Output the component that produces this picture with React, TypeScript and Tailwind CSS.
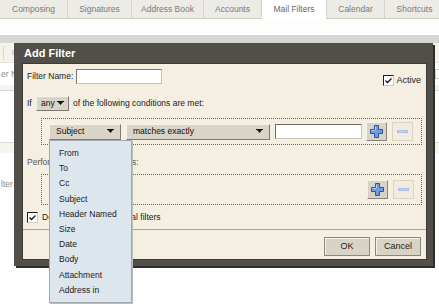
import React from 'react';

const tabs = [
  { label: 'Composing', w: 'w-[68px]' },
  { label: 'Signatures', w: 'w-[64px]' },
  { label: 'Address Book', w: 'w-[72px]' },
  { label: 'Accounts', w: 'w-[58px]' },
  { label: 'Mail Filters', w: 'w-[65px]', active: true },
  { label: 'Calendar', w: 'w-[58px]' },
  { label: 'Shortcuts', w: 'w-[60px]' },
];

const fields = ['From', 'To', 'Cc', 'Subject', 'Header Named', 'Size', 'Date', 'Body', 'Attachment', 'Address in'];

const Arrow = () => (
  <svg width="7" height="5" viewBox="0 0 7 5" className="shrink-0">
    <rect x="0" y="0" width="7" height="1" fill="#111" />
    <polygon points="1,1 6,1 3.5,4" fill="#111" />
  </svg>
);

const PlusBtn = () => (
  <button className="flex h-[19px] w-[21px] items-center justify-center border border-t-[#f4f1ea] border-l-[#f4f1ea] border-r-[#8a857a] border-b-[#8a857a] bg-[#d8d2c6]">
    <svg width="13" height="13" viewBox="0 0 13 13">
      <path d="M4.5 0.5h4v4h4v4h-4v4h-4v-4h-4v-4h4z" fill="#6f9be0" stroke="#2854a6" strokeWidth="1" />
      <path d="M5.5 1.5v3.5M1.5 5.5h3.5" stroke="#b9d0f3" strokeWidth="1" />
    </svg>
  </button>
);

const MinusBtn = () => (
  <button className="flex h-[19px] w-[21px] items-center justify-center border border-[#d9d3c6] bg-[#f2ecdf]">
    <span className="block h-[3px] w-[11px] border border-[#a8bde0] bg-[#c8d7ee]" />
  </button>
);

const Check = () => (
  <span className="flex h-[11px] w-[11px] shrink-0 items-center justify-center border border-[#1c1c1c] border-r-[#d0cbc0] border-b-[#d0cbc0] bg-white">
    <svg width="7" height="6" viewBox="0 0 7 6">
      <path d="M0.5 2.5l2 2 4-4" stroke="#111" strokeWidth="1.3" fill="none" />
    </svg>
  </span>
);

const selectCls =
  'flex items-center justify-between border border-t-[#f6f3ec] border-l-[#f6f3ec] border-r-[#7f7a70] border-b-[#7f7a70] bg-[#d9d4c8] text-[#111]';

export default function App() {
  return (
    <div className="relative h-[304px] w-[439px] overflow-hidden bg-white font-['Liberation_Sans',Arial,sans-serif] text-[8.5px] text-[#1a1a1a]">
      {/* tab bar */}
      <div className="flex h-[19px] border-b border-[#cfccc4] bg-[#ecebe6]">
        {tabs.map((t) => (
          <div
            key={t.label}
            className={`${t.w} flex shrink-0 items-center justify-center border-r border-[#d6d3cb] ${
              t.active ? 'h-[19px] bg-white text-[#666]' : 'text-[#7a7a7a]'
            }`}
          >
            {t.label}
          </div>
        ))}
      </div>
      <div className="h-[16px] bg-[#fdfdfc]" />
      <div className="h-[8px] bg-[#d6d6d4]" />

      {/* page content behind the dialog */}
      <div className="flex h-[20px] items-center border-b border-[#e6e2d8] bg-[#f5f2ea] pl-[3px]">
        <span className="h-[14px] w-px bg-[#d8d5cc]" />
        <span className="ml-[8px] h-[5px] w-[3px] bg-[#e6c8e6]" />
      </div>
      <div className="flex h-[22px] items-center text-[#8a8a8a]">
        <span className="pl-[1px]">er N</span>
        <span className="ml-auto mr-[-4px] h-[10px] w-[8px] border border-[#c9c9c9]" />
      </div>
      <div className="h-[6px] border-b border-[#d7d7d7] bg-[#f3f3f1]" />
      <div className="h-[51px]" />
      <div className="h-[11px] border-t border-[#d9d9d9] bg-[#f6f4ee]" />
      <div className="flex h-[38px] items-end pl-[1px] text-[#8a8a8a]">lter</div>

      {/* dialog */}
      <div className="absolute left-[14px] top-[43px] flex h-[223px] w-[419px] flex-col bg-[#524f49] shadow-[2px_2px_0_#2e2d2a]">
        <div className="flex h-[20px] items-center pl-[10px] text-[11px] font-bold text-white">Add Filter</div>
        <div className="relative ml-[8px] mr-[6px] flex h-[197px] flex-col border border-[#3e3c37] bg-[#f5efe1] px-[4px] pt-[5px]">
          {/* name row */}
          <div className="flex h-[15px] items-center">
            <span className="whitespace-nowrap">Filter Name:</span>
            <span className="ml-[3px] h-[15px] w-[86px] border border-[#7f7a70] border-r-[#c9c3b6] border-b-[#c9c3b6] bg-white" />
            <span className="ml-auto mr-[1px] flex items-center gap-[2px] pt-[8px] text-[9px]">
              <Check />
              Active
            </span>
          </div>

          {/* any row */}
          <div className="mt-[12px] flex h-[15px] items-center">
            <span className="w-[9px]">If</span>
            <span className={`${selectCls} h-[15px] w-[33px] px-[4px]`}>
              any
              <Arrow />
            </span>
            <span className="ml-[4px]">of the following conditions are met:</span>
          </div>

          {/* conditions */}
          <div className="ml-[14px] mt-[7px] flex h-[27px] w-[381px] items-center border border-dotted border-[#6a675f] pl-[7px]">
            <span className={`${selectCls} h-[16px] w-[72px] px-[6px]`}>
              Subject
              <Arrow />
            </span>
            <span className={`${selectCls} ml-[5px] h-[16px] w-[144px] px-[6px]`}>
              matches exactly
              <Arrow />
            </span>
            <span className="ml-[5px] h-[15px] w-[87px] border border-[#6f6a60] border-r-[#c9c3b6] border-b-[#c9c3b6] bg-white" />
            <span className="ml-[4px]">
              <PlusBtn />
            </span>
            <span className="ml-[5px]">
              <MinusBtn />
            </span>
          </div>

          <div className="mt-[12px] h-[10px] leading-[10px] text-[#555]">Perform the following actions:</div>

          {/* actions */}
          <div className="ml-[14px] mt-[7px] flex h-[31px] w-[381px] items-center justify-end border border-dotted border-[#6a675f] pr-[7px]">
            <PlusBtn />
            <span className="ml-[5px]">
              <MinusBtn />
            </span>
          </div>

          <div className="mt-[7px] flex h-[11px] items-center gap-[4px]">
            <Check />
            Do not process additional filters
          </div>

          <div className="-mx-[4px] mt-[6px] h-px bg-[#a9a396]" />

          <div className="mt-[7px] flex justify-end gap-[5px] pr-[1px]">
            <button className="h-[19px] w-[46px] border border-[#8c877c] bg-[#d8d3c7] text-[9px] text-[#222] shadow-[inset_1px_1px_0_#f4f1ea]">
              OK
            </button>
            <button className="h-[19px] w-[46px] border border-[#8c877c] bg-[#d8d3c7] text-[9px] text-[#222] shadow-[inset_1px_1px_0_#f4f1ea]">
              Cancel
            </button>
          </div>

          {/* open field menu */}
          <div className="absolute left-[26px] top-[76px] w-[83px] border border-[#a3a8ad] bg-[#dde6ed] pb-[4px] pt-[5px] shadow-[1px_1px_0_#b8bdc2]">
            {fields.map((f) => (
              <div key={f} className="h-[15.2px] pl-[9px] leading-[15.2px] text-[#1a1a1a]">
                {f}
              </div>
            ))}
          </div>
        </div>
      </div>
    </div>
  );
}
